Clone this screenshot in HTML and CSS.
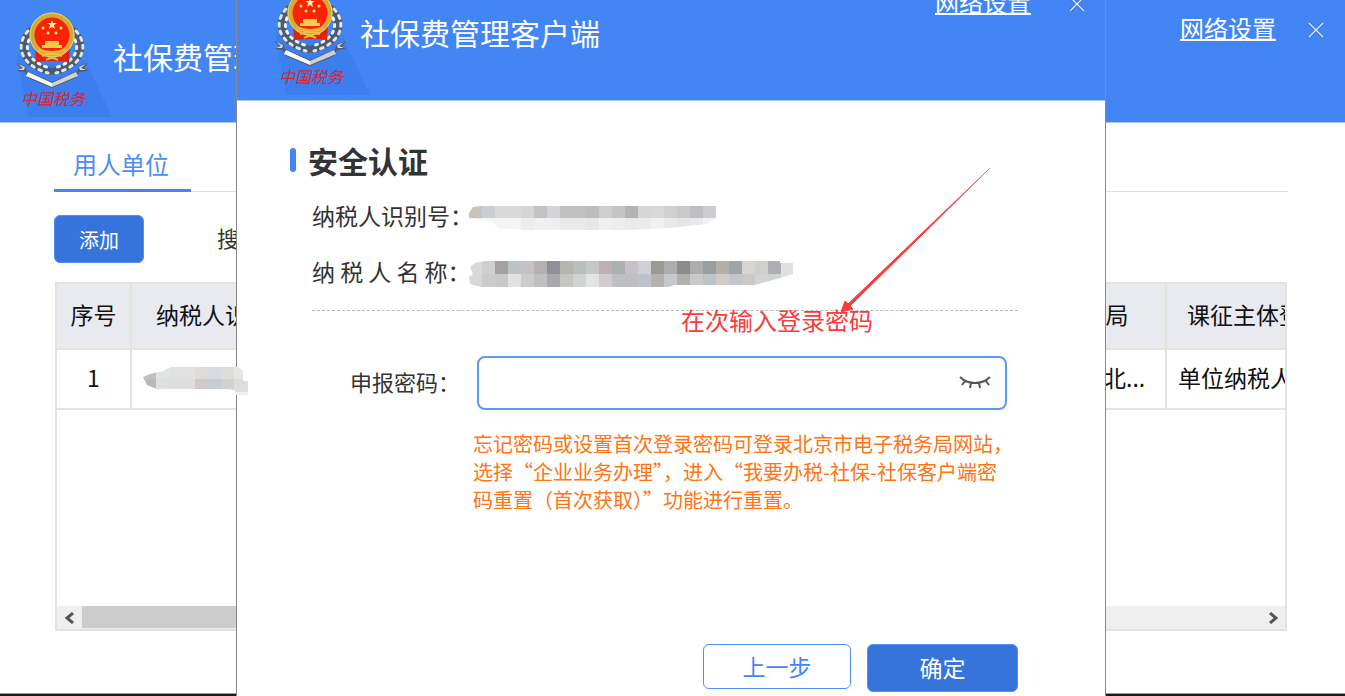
FILE: index.html
```html
<!DOCTYPE html>
<html lang="zh-CN">
<head>
    <meta charset="UTF-8">
    <meta name="viewport" content="width=device-width, initial-scale=1.0">
    <title>社保费管理客户端</title>
    <link rel="stylesheet" href="styles.css">
</head>
<body>
    <svg class="defs" aria-hidden="true">
        <symbol id="emblem" class="emblem" viewBox="0 0 102 118">
            <path d="M17 56L85 60L112 117H28Z" fill="#3d7eef"/>
            <g fill="none" stroke-linecap="round">
                <path d="M31 31C18 45 22 64 49 71M73 31C86 45 82 64 55 71" stroke="#4c5c70" stroke-width="8"/>
                <path d="M28 31C15 45 20 65 48 73M76 31C89 45 84 65 56 73" stroke="#dfe5ea" stroke-width="3" stroke-dasharray="3 5"/>
                <path d="M33 34C22 46 27 62 50 68M71 34C82 46 77 62 54 68" stroke="#f4f6f8" stroke-width="3" stroke-dasharray="2 5"/>
            </g>
            <path d="M35 47H70L69 62Q52 60 36 62Z" fill="#e5200f"/>
            <circle cx="52" cy="35" r="20" fill="#fb2205" stroke="#d3aa35" stroke-width="5"/>
            <circle cx="52" cy="35" r="22" fill="none" stroke="#f1d56a" stroke-width="1"/>
            <path d="M52 20l1 3h4l-3 2 1 4-3-2-3 2 1-4-3-2h4z" fill="#fff0a8"/>
            <g fill="#ffe680">
                <circle cx="43" cy="28" r="1.500"/><circle cx="61" cy="28" r="1.500"/>
                <circle cx="48" cy="33" r="1.500"/><circle cx="56" cy="33" r="1.500"/>
            </g>
            <path d="M45 41H59V45H62V48H42V45H45Z" fill="#f3cf45"/>
            <path d="M38 50Q52 55 66 50" fill="none" stroke="#e7b936" stroke-width="3"/>
            <path d="M42 56Q52 52 62 56M46 60Q52 56 58 60" fill="none" stroke="#e9c04b" stroke-width="2"/>
            <path d="M16 63L25 66L27 71L52 82L77 71L79 66L88 63L84 68L88 71L79 72L76 78L52 88L28 78L25 72L17 71L21 68Z" fill="#525b68"/>
            <path d="M18 64L25 67L24 70L18 70L23 68ZM86 64L79 67L80 70L86 70L81 68Z" fill="#d5dbe0"/>
            <path d="M28 72L52 83L52 87L26 76Z" fill="#fafafa"/>
            <path d="M76 72L52 83L52 87L78 76Z" fill="#cfd2d5"/>
            <text class="emblem-text" x="21" y="105">中国税务</text>
        </symbol>
        <symbol id="close" viewBox="0 0 16 16">
            <path d="M1 1L15 15M15 1L1 15" fill="none" stroke="#2f62b5" stroke-width="3" opacity=".5"/>
            <path d="M1 1L15 15M15 1L1 15" fill="none" stroke="#e8eefa" stroke-width="1.300"/>
        </symbol>
    </svg>

    <main class="window">
        <header class="titlebar">
            <svg class="logo"><use href="#emblem"/></svg>
            <h1 class="app-name">社保费管理客户端</h1>
            <a href="#" class="settings">网络设置</a>
            <button class="close" aria-label="关闭"><svg><use href="#close"/></svg></button>
        </header>
        <div class="content">
            <nav class="tabs"><a href="#" class="tab active">用人单位</a></nav>
            <div class="toolbar">
                <button class="btn add">添加</button>
                <span class="search-label">搜索：</span>
            </div>
            <div class="grid">
                <table>
                    <colgroup><col class="col-no"><col><col class="col-office"><col class="col-type"></colgroup>
                    <thead>
                        <tr><th>序号</th><th class="id-head">纳税人识别号</th><th>主管税务分局</th><th>课征主体登记</th></tr>
                    </thead>
                    <tbody>
                        <tr>
                            <td class="num">1</td>
                            <td><svg class="mosaic mosaic-cell" viewBox="0 0 105 29" data-shape="M0 11L7 8L20 5L28 1H95L100 5V15H105V29H92V24L84 23H14L4 19Z" data-rows="c0bfbf,e0e4e3,e1e1e0,e1e1e1,dfdbd9,d5dbdf,dcdcda,e5e5e4,e4e4e4|b9b8b7,dce1e0,dedfdd,dedede,cfcac7,c7cdd2,d4d0ce,dedede,e0e0e0|eeeeee,eeeeee,eeeeee,eeeeee,eeeeee,eeeeee,eeeeee,efefef,efefef"></svg></td>
                            <td>国家税务总局北...</td>
                            <td>单位纳税人</td>
                        </tr>
                    </tbody>
                </table>
                <div class="scrollbar">
                    <button class="arrow" aria-label="向左"><svg viewBox="0 0 10 12"><path d="M8 1L2 6L8 11" fill="none" stroke="#555" stroke-width="3"/></svg></button>
                    <div class="track"><div class="thumb"></div></div>
                    <button class="arrow" aria-label="向右"><svg viewBox="0 0 10 12"><path d="M2 1L8 6L2 11" fill="none" stroke="#555" stroke-width="3"/></svg></button>
                </div>
            </div>
        </div>
    </main>

    <section class="dialog" role="dialog" aria-labelledby="dialog-title">
        <header class="titlebar">
            <svg class="logo"><use href="#emblem"/></svg>
            <div class="app-name">社保费管理客户端</div>
            <a href="#" class="settings">网络设置</a>
            <button class="close" aria-label="关闭"><svg><use href="#close"/></svg></button>
        </header>
        <div class="dialog-body">
            <h2 id="dialog-title">安全认证</h2>
            <div class="info">
                <span class="info-label">纳税人识别号：</span>
                <svg class="mosaic mosaic-id" viewBox="0 0 247 26" data-shape="M0 8L4 2L12 1H247V13L238 19L200 23L160 25H58L30 23L24 18L14 15L0 13Z" data-rows="c9c3bd,c8ced1,d9d9d9,d9d9d9,d6d5d3,c2c2c1,d3d4d7,c1c1c1,c1c1c1,bdbdbd,cecece,c5c5c4,b4b4b4,d5d7d6,d8d8d8,cfcfce,c9c9c9,bebfc2,cbccd0|eeecea,f4f5f5,f4f4f4,f4f4f4,eeedeb,f0f0f0,eeeff0,e9e9e9,e9e9e9,e7e7e7,eff1f0,eeedeb,eaeae8,eaecee,f3f1ef,e9e9e9,e5e5e5,e9e9e9,f3f3f3"></svg>
            </div>
            <div class="info">
                <span class="info-label">纳 税 人 名 称：</span>
                <svg class="mosaic mosaic-name" viewBox="0 0 324 26" data-shape="M1 6L6 2L16 0H311V2H324V13L311 17L286 24H205L200 26H12L1 23L0 16L4 13Z" data-rows="d6d8da,d1d0ce,a5a19f,bdc3c4,c5c2c5,b7b0b3,908e99,b5b6b0,b9bfc1,c5c6c6,bbb1b2,abb1b2,c7c1c7,cfd0d5,9c9894,adadad,8d8c8a,aeacaf,999ea2,b5afa9,9da4a7,d7d5d3,d0cfcc,adaeb1,dde1e4|d7d9d9,cccacc,c9c9c9,e1e1e1,cccccc,c1c0c1,aba8ad,c5c6c0,d1d2d4,e3e3e3,d1ccce,bfbec0,c0bec4,bfc2ca,b3b2ad,c7c8cb,b0b0ad,c8c9c8,bdc3c8,d2cbc7,c2c6cd,cccac9,d3d2d4,cfd2d3,dde1e4"></svg>
            </div>
            <form class="auth">
                <div class="field">
                    <label for="password">申报密码：</label>
                    <div class="input-box">
                        <input type="password" id="password">
                        <button type="button" class="eye" aria-label="显示密码">
                            <svg viewBox="0 0 32 16"><path d="M1 2Q7 8 16 8Q25 8 31 2M6 6L3 10M12 8L11 13M20 8L21 13M27 6L30 10" fill="none" stroke="#555" stroke-width="2"/></svg>
                        </button>
                    </div>
                </div>
                <p class="hint">忘记密码或设置首次登录密码可登录北京市电子税务局网站，<br>选择“企业业务办理”，进入“我要办税-社保-社保客户端密<br>码重置（首次获取）”功能进行重置。</p>
                <div class="actions">
                    <button type="button" class="btn back">上一步</button>
                    <button type="button" class="btn ok">确定</button>
                </div>
            </form>
            <div class="note">
                <svg viewBox="0 0 150 146">
                    <defs><linearGradient id="fade" x1="0" y1="1" x2="1" y2="0"><stop offset="0.700" stop-color="#f93b3b"/><stop offset="1" stop-color="#f93b3b" stop-opacity=".4"/></linearGradient></defs>
                    <path d="M0 145L4 134L7 137L149 1L9 139L12 142Z" fill="url(#fade)" stroke="url(#fade)" stroke-width="1"/>
                </svg>
                <span>在次输入登录密码</span>
            </div>
        </div>
    </section>

    <script>
        // fill every mosaic with 13px blocks, clipped to its brush shape
        document.querySelectorAll('.mosaic').forEach((svg, n) => {
            const rows = svg.dataset.rows.split('|').map(row => row.split(','));
            let html = `<clipPath id="brush${n}"><path d="${svg.dataset.shape}"/></clipPath><g clip-path="url(#brush${n})" shape-rendering="crispEdges">`;
            rows.forEach((row, y) => row.forEach((color, x) => {
                html += `<rect x="${x * 13}" y="${y * 13}" width="13" height="13" fill="#${color}"/>`;
            }));
            svg.innerHTML = html + '</g>';
        });
    </script>
</body>
</html>
```
FILE: styles.css
```css
* { box-sizing: border-box; margin: 0; padding: 0; }
body { font-family: "Noto Sans CJK SC", "Noto Sans", sans-serif; height: 100vh; overflow: hidden; position: relative; background: #1b1b1b; color: #333; }
button, input { font-family: inherit; }
button { cursor: pointer; }
.defs { position: absolute; width: 0; height: 0; }

.window { display: flex; flex-direction: column; height: calc(100vh - 2px); background: #fff; border-bottom: 1px solid #999; }

/* title bar, shared by the window and the dialog */
.titlebar { display: flex; align-items: flex-start; height: 123px; flex-shrink: 0; background: #4285f4; border-bottom: 1px solid #a9c8fa; color: #fff; }
.logo { width: 102px; height: 118px; flex-shrink: 0; overflow: visible; }
.emblem { overflow: visible; }
.emblem-text { font-size: 16px; font-style: italic; fill: #d9262c; }
.app-name { flex: 1; font-size: 30px; font-weight: 400; line-height: 40px; margin: 36px 0 0 11px; white-space: nowrap; }
.settings { color: #fff; font-size: 24px; line-height: 30px; margin-top: 13px; text-underline-offset: 1px; }
.close { width: 16px; height: 16px; margin: 22px 21px 0 32px; background: none; border: none; }
.close svg { display: block; width: 16px; height: 16px; }

.content { flex: 1; display: flex; flex-direction: column; padding: 17px 57px 62px 54px; }
.tabs { display: flex; border-bottom: 1px solid #ddd; }
.tab { padding: 6px 22px 7px 19px; margin-bottom: -1px; font-size: 24px; line-height: 36px; color: #4c8df6; text-decoration: none; }
.tab.active { border-bottom: 3px solid #4285f4; }
.toolbar { display: flex; align-items: center; gap: 73px; margin: 23px 0 19px; }
.search-label { font-size: 22px; line-height: 32px; padding-bottom: 4px; }
.btn { font-size: 23px; padding-bottom: 2px; border: 1px solid #4f90f7; border-radius: 6px; background: #3674db; color: #fff; }
.add { width: 90px; height: 48px; font-size: 20px; padding: 0; }

.grid { flex: 1; display: flex; flex-direction: column; border: 2px solid #e1e3dc; margin: 0 1px; overflow: hidden; }
table { width: calc(100% + 62px); table-layout: fixed; border-collapse: separate; border-spacing: 0; color: #111; }
.col-no { width: 75px; }
.col-office { width: 213px; }
.col-type { width: 180px; }
th, td { border-right: 2px solid #e1e3dc; border-bottom: 2px solid #e1e3dc; font-size: 23px; font-weight: normal; white-space: nowrap; }
th { height: 66px; padding-bottom: 4px; background: #e8eaf0; }
td { height: 60px; padding: 0 0 4px 11px; }
.id-head { text-align: left; padding-left: 24px; }
.num { text-align: center; padding-left: 0; }
.scrollbar { display: flex; height: 23px; margin-top: auto; background: #efefef; }
.arrow { width: 25px; border: none; background: none; }
.arrow svg { display: block; width: 10px; height: 12px; margin: 0 auto; }
.track { flex: 1; }
.thumb { width: 75%; height: 22px; background: #ccc; }

.mosaic { display: block; flex-shrink: 0; }
.mosaic-cell { position: relative; z-index: 3; width: 105px; height: 29px; margin-top: 6px; }
.mosaic-id { width: 247px; height: 26px; }
.mosaic-name { width: 324px; height: 26px; }

/* the dialog hangs over the window, cut by its top and bottom edges */
.dialog { position: absolute; z-index: 2; top: -23px; bottom: -40px; left: 236px; right: 239px; background: #fff; border: 1px solid #8a8a8a; }
.dialog .logo { margin-left: 21px; }
.dialog .app-name { margin: 34px 0 0; }
.dialog .settings { margin-top: 9px; }
.dialog .close { margin: 18px 20px 0 38px; }
.dialog-body { position: relative; padding: 43px 87px 0 53px; }
h2 { display: flex; align-items: center; gap: 12px; font-size: 30px; line-height: 32px; margin-bottom: 26px; }
h2::before { content: ""; width: 6px; height: 24px; border-radius: 3px; background: #4285f4; }
.info { display: flex; align-items: center; height: 32px; margin: 0 0 24px 22px; font-size: 23px; }
.info-label { width: 157px; padding-bottom: 6px; white-space: nowrap; }
.auth { margin-left: 22px; margin-top: -4px; padding-top: 45px; border-top: 1px dashed #bbb; }
.field { display: flex; align-items: center; padding: 0 11px 0 38px; }
.field label { width: 127px; padding-bottom: 4px; font-size: 22px; white-space: nowrap; }
.input-box { flex: 1; display: flex; align-items: center; height: 54px; padding-right: 14px; border: 2px solid #5c98f8; border-radius: 8px; }
.input-box input { flex: 1; min-width: 0; height: 46px; padding: 0 12px; border: none; outline: none; background: none; font-size: 22px; }
.eye { width: 32px; height: 16px; background: none; border: none; }
.eye svg { display: block; width: 32px; height: 16px; }
.hint { margin: 20px 0 0 161px; font-size: 20px; line-height: 28px; color: #ff7414; white-space: nowrap; }
.actions { display: flex; justify-content: flex-end; align-items: flex-start; gap: 16px; margin-top: 130px; }
.back { width: 148px; height: 45px; background: #fff; color: #4285f4; }
.ok { width: 151px; height: 48px; }

.note { position: absolute; top: 66px; left: 444px; font-size: 24px; line-height: 30px; color: #f93b3b; }
.note svg { display: block; width: 150px; height: 146px; margin-left: 160px; margin-bottom: -8px; }
```
